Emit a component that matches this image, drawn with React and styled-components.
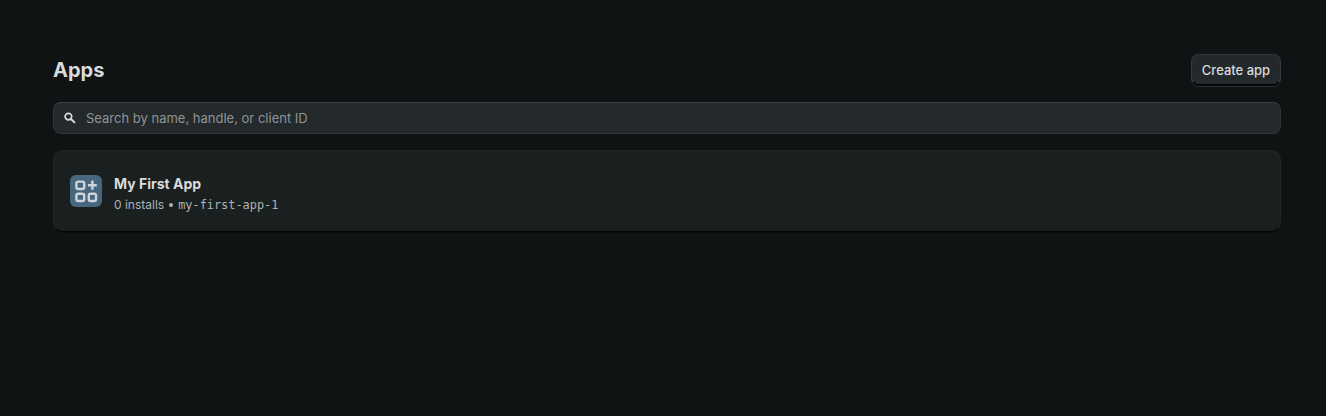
import React from "react";
import styled, { createGlobalStyle } from "styled-components";

const Global = createGlobalStyle`
  html, body { margin: 0; padding: 0; background: #101314; height: 100%; }
  body { font-family: Inter, "Noto Sans", sans-serif; }
`;

const Page = styled.main`
  display: flex;
  flex-direction: column;
  gap: 16px;
  padding: 54px 45px 0 53px;
  min-height: 416px;
  box-sizing: border-box;
  background: #101314;
`;

const Header = styled.header`
  display: flex;
  align-items: center;
  justify-content: space-between;
  height: 32px;
`;

const Title = styled.h1`
  margin: 0;
  font-size: 20px;
  line-height: 32px;
  font-weight: 700;
  color: #d8dadb;
`;

const Button = styled.button`
  box-sizing: border-box;
  height: 32px;
  width: 90px;
  padding: 0;
  font: 450 13px/20px Inter, sans-serif;
  color: #d8dadb;
  background: #23282a;
  border: 1px solid #33393b;
  border-bottom: 2px solid #060808;
  border-radius: 8px;
  box-shadow: 0 1px 0 #2a2f30;
`;

const Search = styled.label`
  box-sizing: border-box;
  display: flex;
  align-items: center;
  gap: 9px;
  height: 32px;
  padding: 0 9px;
  background: #24292b;
  border: 1px solid #303536;
  border-top-color: #3a3f40;
  border-radius: 8px;
`;

const SearchInput = styled.input`
  flex: 1;
  background: none;
  border: 0;
  outline: 0;
  padding: 0;
  font: 400 13px/20px Inter, sans-serif;
  color: #d8dadb;
  &::placeholder { color: #8f9496; opacity: 1; }
`;

const Card = styled.section`
  box-sizing: border-box;
  display: flex;
  align-items: center;
  gap: 12px;
  height: 82px;
  padding: 0 16px;
  background: #1a2020;
  border: 1px solid #212828;
  border-bottom: 1px solid #050707;
  border-radius: 10px;
  box-shadow: 0 1px 0 #0a0c0c;
`;

const AppIcon = styled.div`
  width: 32px;
  height: 32px;
  border-radius: 6px;
  background: #47677f;
  display: flex;
`;

const Info = styled.div`
  display: flex;
  flex-direction: column;
  gap: 1px;
  padding-top: 7px;
`;

const Name = styled.div`
  font-size: 14px;
  line-height: 20px;
  font-weight: 700;
  color: #d8dadb;
`;

const Meta = styled.div`
  display: flex;
  align-items: center;
  font-size: 12px;
  line-height: 20px;
  color: #aeb2b3;
`;

const Dot = styled.span`
  width: 4px;
  height: 4px;
  margin: 0 5px 0 5px;
  border-radius: 50%;
  background: #aeb2b3;
`;

const Handle = styled.span`
  font-family: "DejaVu Sans Mono", monospace;
  font-size: 11.9px;
`;

export default function App() {
  return (
    <>
      <Global />
      <Page>
        <Header>
          <Title>Apps</Title>
          <Button>Create app</Button>
        </Header>
        <Search>
          <svg width="14" height="14" viewBox="0 0 14 14" fill="none">
            <circle cx="5.4" cy="5.6" r="3.3" stroke="#d8dadb" strokeWidth="1.7" />
            <path d="M8 8l3.4 3.4" stroke="#d8dadb" strokeWidth="2" strokeLinecap="round" />
          </svg>
          <SearchInput placeholder="Search by name, handle, or client ID" />
        </Search>
        <Card>
          <AppIcon>
            <svg width="32" height="32" viewBox="0 0 32 32" fill="none" stroke="#cfd4d8" strokeWidth="2.4">
              <rect x="6.4" y="6.6" width="7.8" height="7.4" rx="1.8" />
              <rect x="6.4" y="18.8" width="7.8" height="7.2" rx="1.8" />
              <rect x="18.8" y="18.8" width="7.2" height="7.2" rx="1.8" />
              <path d="M22.4 5.6v9.2M18 10.2h8.8" />
            </svg>
          </AppIcon>
          <Info>
            <Name>My First App</Name>
            <Meta>
              0 installs<Dot /><Handle>my-first-app-1</Handle>
            </Meta>
          </Info>
        </Card>
      </Page>
    </>
  );
}
